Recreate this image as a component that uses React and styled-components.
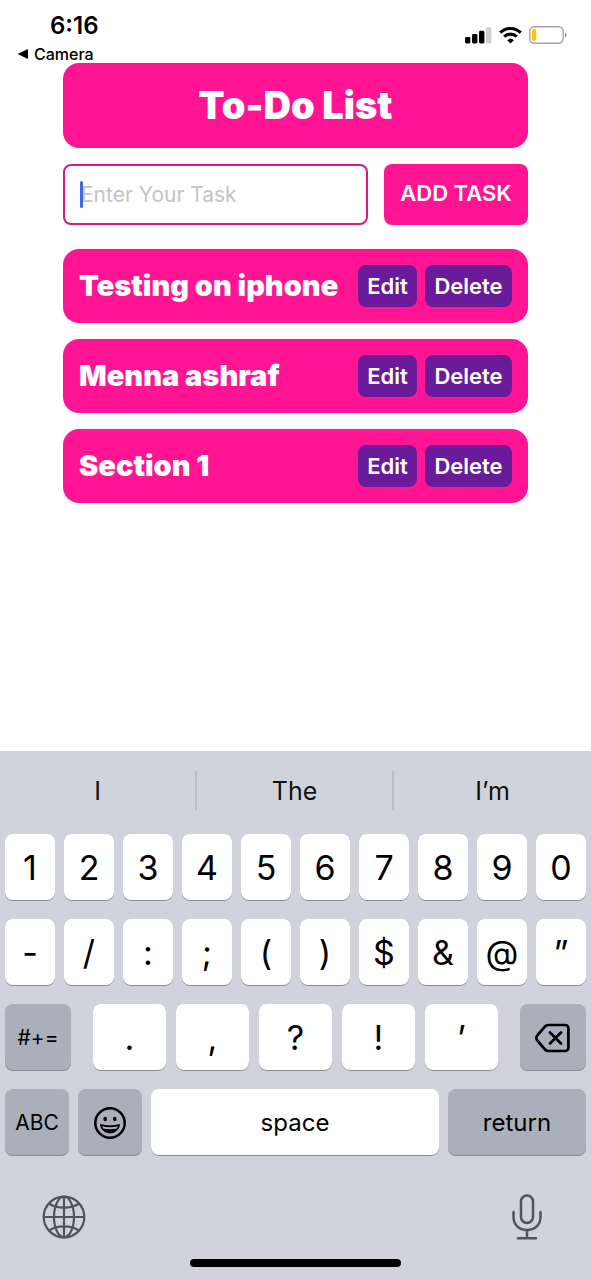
import React from "react";
import styled, { createGlobalStyle } from "styled-components";

const GlobalStyle = createGlobalStyle`
  *, *::before, *::after { box-sizing: border-box; }
  body {
    margin: 0;
    background: #fff;
    color: #000;
    font-family: Inter, "Liberation Sans", sans-serif;
  }
  button, input { font: inherit; color: inherit; }
  h1, h2, ul { margin: 0; padding: 0; }
`;

const Screen = styled.div`
  display: flex;
  flex-direction: column;
  min-height: 100vh;
`;

const StatusBar = styled.header`
  display: flex;
  justify-content: space-between;
  height: 63px;
  padding: 12px 23px 0 17px;
`;

const StatusLeft = styled.div`
  display: flex;
  flex-direction: column;
`;

const Time = styled.time`
  padding-left: 33px;
  font-size: 24px;
  font-weight: 600;
  line-height: 28px;
`;

const BackLink = styled.a`
  display: flex;
  align-items: center;
  gap: 6px;
  color: #000;
  font-size: 16px;
  font-weight: 500;
  line-height: 28px;
  text-decoration: none;
`;

const StatusIcons = styled.div`
  display: flex;
  align-items: center;
  gap: 7px;
  height: 46px;
`;

const Main = styled.main`
  display: flex;
  flex-direction: column;
  padding: 0 63px 24px;
`;

const TitleCard = styled.h1`
  padding: 16px;
  border-radius: 16px;
  background: #ff1493;
  color: #fff;
  font-size: 38px;
  font-weight: 900;
  line-height: 53px;
  text-align: center;
`;

const TaskForm = styled.form`
  display: flex;
  gap: 16px;
  margin: 16px 0 24px;
`;

const Field = styled.label`
  position: relative;
  flex: 1;
  min-width: 0;
`;

const Caret = styled.span`
  position: absolute;
  top: 17px;
  left: 17px;
  width: 3px;
  height: 27px;
  border-radius: 2px;
  background: #4169e1;
`;

const TaskInput = styled.input`
  display: block;
  width: 100%;
  height: 61px;
  padding: 0 16px;
  border: 2px solid #d81b7f;
  border-radius: 8px;
  outline: none;
  background: #fff;
  font-size: 21px;
  &::placeholder { color: #c4c4c6; opacity: 1; }
`;

const AddButton = styled.button`
  flex: none;
  width: 144px;
  padding: 0 0 4px;
  border: 0;
  border-radius: 8px;
  background: #ff1493;
  color: #fff;
  font-size: 22px;
  font-weight: 600;
  white-space: nowrap;
`;

const TaskList = styled.ul`
  display: flex;
  flex-direction: column;
  gap: 16px;
  list-style: none;
`;

const TaskItem = styled.li`
  display: flex;
  align-items: center;
  gap: 8px;
  padding: 16px;
  border-radius: 16px;
  background: #ff1493;
`;

const TaskName = styled.h2`
  flex: 1;
  min-width: 0;
  color: #fff;
  font-size: 29px;
  font-weight: 900;
  line-height: 42px;
  white-space: nowrap;
`;

const TaskButton = styled.button`
  flex: none;
  width: ${(p) => p.$width}px;
  height: 42px;
  padding: 0;
  border: 0;
  border-radius: 8px;
  background: #6a1b9a;
  color: #fff;
  font-size: 22px;
  font-weight: 600;
`;

const Keyboard = styled.section`
  margin-top: auto;
  background: #d0d3db;
`;

const Suggestions = styled.div`
  display: grid;
  grid-template-columns: repeat(3, 1fr);
  padding: 20px 0 24px;
`;

const Suggestion = styled.button`
  height: 39px;
  padding: 0;
  border: 0;
  border-right: ${(p) => (p.$last ? "0" : "2px solid #bcbfc5")};
  background: none;
  color: #111;
  font-size: 25px;
`;

const Keys = styled.div`
  display: flex;
  flex-direction: column;
  gap: 18px;
  padding: 0 5px;
`;

const KeyRow = styled.div`
  display: flex;
  gap: ${(p) => p.$gap || 9}px;
`;

const KeyGroup = styled.div`
  display: flex;
  flex: 1;
  gap: 10px;
`;

const Key = styled.button`
  display: flex;
  align-items: center;
  justify-content: center;
  flex: ${(p) => (p.$width ? `0 0 ${p.$width}px` : "1 1 0")};
  min-width: 0;
  height: 67px;
  padding: 0;
  border: 0;
  border-radius: 8px;
  background: ${(p) => (p.$dark ? "#a9afbb" : "#fff")};
  box-shadow: inset 0 -1px 0 #898b90;
  color: #000;
  font-size: ${(p) => p.$size || 34}px;
`;

const KeyboardFooter = styled.div`
  display: flex;
  align-items: center;
  justify-content: space-between;
  height: 103px;
  padding: 18px 48px 0 42px;
`;

const IconButton = styled.button`
  display: flex;
  padding: 0;
  border: 0;
  background: none;
  color: #50545c;
`;

const HomeIndicator = styled.div`
  width: 211px;
  height: 8px;
  margin: 0 auto 13px;
  border-radius: 4px;
  background: #000;
`;

const SignalIcon = () => (
  <svg width="27" height="18" viewBox="0 0 27 18" aria-hidden="true">
    <rect x="0" y="11" width="5.4" height="6.5" rx="1.4" />
    <rect x="7" y="8" width="5.4" height="9.5" rx="1.4" />
    <rect x="14" y="4.8" width="5.4" height="12.7" rx="1.4" />
    <rect x="21" y="1.2" width="5.4" height="16.3" rx="1.4" fill="#cfcfcf" />
  </svg>
);

const WifiIcon = () => (
  <svg width="23" height="18" viewBox="0 0 23 18" fill="none" stroke="#000" strokeWidth="3.1" aria-hidden="true">
    <path d="M1.2 6.7C7 1 16 1 21.8 6.7" />
    <path d="M5.2 10.7c3.6-3.4 9-3.4 12.6 0" />
    <path d="M8.1 14.2c2-1.8 4.8-1.8 6.8 0l-3.400 3.400z" fill="#000" stroke="none" />
  </svg>
);

const BatteryIcon = () => (
  <svg width="39" height="18" viewBox="0 0 39 18" aria-hidden="true">
    <rect x="0.8" y="0.8" width="33.4" height="16.4" rx="4.5" fill="none" stroke="#a3a3a3" strokeWidth="1.4" />
    <rect x="3" y="3" width="4.2" height="12" rx="1.8" fill="#fdc60b" />
    <path d="M36 6.5c2 .8 2 4.2 0 5z" fill="#8a8a8a" />
  </svg>
);

const BackArrow = () => (
  <svg width="11" height="10" viewBox="0 0 11 10" aria-hidden="true">
    <path d="M0.5 5 11 0v10z" />
  </svg>
);

const BackspaceIcon = () => (
  <svg width="36" height="30" viewBox="0 0 36 30" fill="none" stroke="#000" strokeWidth="2.7" strokeLinecap="round" strokeLinejoin="round" aria-hidden="true">
    <path d="M13.2 2h17a3.200 3.200 0 0 1 3.200 3.200v19.600a3.200 3.200 0 0 1-3.200 3.200h-17a4 4 0 0 1-2.900-1.200L2.700 18a4 4 0 0 1 0-6l7.600-8.800A4 4 0 0 1 13.200 2z" />
    <path d="m15 9.500 11 11m0-11-11 11" />
  </svg>
);

const SmileIcon = () => (
  <svg width="34" height="34" viewBox="0 0 34 34" aria-hidden="true">
    <circle cx="17" cy="17" r="14.7" fill="none" stroke="#000" strokeWidth="2.5" />
    <ellipse cx="12.2" cy="13" rx="1.8" ry="2.3" />
    <ellipse cx="21.8" cy="13" rx="1.8" ry="2.3" />
    <path d="M7.6 18.600c5.800 1.700 13 1.700 18.800 0-.3 4.900-4.400 8.300-9.400 8.300s-9.100-3.400-9.400-8.300z" stroke="#000" strokeLinejoin="round" />
    <path d="M9.3 20.300c4.800 1.300 10.600 1.300 15.400 0l-.7 2.100c-4.300 1.100-9.700 1.100-14 0z" fill="#a9afbb" />
  </svg>
);

const GlobeIcon = () => (
  <svg width="44" height="44" viewBox="0 0 44 44" fill="none" stroke="currentColor" strokeWidth="2.2" aria-hidden="true">
    <circle cx="22" cy="22" r="20.3" />
    <ellipse cx="22" cy="22" rx="10" ry="20.3" />
    <path d="M22 1.7v40.6M1.7 22h40.6" />
    <path d="M7 8.500c8 5.500 22 5.500 30 0M7 35.500c8-5.500 22-5.500 30 0" />
  </svg>
);

const MicIcon = () => (
  <svg width="32" height="46" viewBox="0 0 32 46" fill="none" stroke="currentColor" strokeWidth="2.5" strokeLinecap="round" aria-hidden="true">
    <rect x="10" y="1.5" width="12" height="27.500" rx="6" />
    <path d="M2.500 18v5c0 8 6 13 13.500 13s13.500-5 13.500-13v-5M16 36v8M7 44.300h18" />
  </svg>
);

const tasks = ["Testing on iphone", "Menna ashraf", "Section 1"];
const digits = ["1", "2", "3", "4", "5", "6", "7", "8", "9", "0"];
const symbols = ["-", "/", ":", ";", "(", ")", "$", "&", "@", "”"];
const punctuation = [".", ",", "?", "!", "’"];

export default function App() {
  return (
    <Screen>
      <GlobalStyle />
      <StatusBar>
        <StatusLeft>
          <Time>6:16</Time>
          <BackLink href="#camera">
            <BackArrow />
            Camera
          </BackLink>
        </StatusLeft>
        <StatusIcons>
          <SignalIcon />
          <WifiIcon />
          <BatteryIcon />
        </StatusIcons>
      </StatusBar>

      <Main>
        <TitleCard>To-Do List</TitleCard>
        <TaskForm onSubmit={(e) => e.preventDefault()}>
          <Field>
            <TaskInput type="text" placeholder="Enter Your Task" aria-label="Enter Your Task" />
            <Caret />
          </Field>
          <AddButton type="submit">ADD TASK</AddButton>
        </TaskForm>
        <TaskList>
          {tasks.map((task) => (
            <TaskItem key={task}>
              <TaskName>{task}</TaskName>
              <TaskButton type="button" $width={59}>Edit</TaskButton>
              <TaskButton type="button" $width={87}>Delete</TaskButton>
            </TaskItem>
          ))}
        </TaskList>
      </Main>

      <Keyboard aria-label="Keyboard">
        <Suggestions>
          <Suggestion type="button">I</Suggestion>
          <Suggestion type="button">The</Suggestion>
          <Suggestion type="button" $last>I’m</Suggestion>
        </Suggestions>
        <Keys>
          {[digits, symbols].map((row) => (
            <KeyRow key={row[0]}>
              {row.map((char) => (
                <Key type="button" key={char}>{char}</Key>
              ))}
            </KeyRow>
          ))}
          <KeyRow $gap={22}>
            <Key type="button" $dark $width={66} $size={21}>#+=</Key>
            <KeyGroup>
              {punctuation.map((char) => (
                <Key type="button" key={char}>{char}</Key>
              ))}
            </KeyGroup>
            <Key type="button" $dark $width={66} aria-label="Delete">
              <BackspaceIcon />
            </Key>
          </KeyRow>
          <KeyRow>
            <Key type="button" $dark $width={64} $size={21}>ABC</Key>
            <Key type="button" $dark $width={64} aria-label="Emoji">
              <SmileIcon />
            </Key>
            <Key type="button" $size={24}>space</Key>
            <Key type="button" $dark $width={138} $size={24}>return</Key>
          </KeyRow>
        </Keys>
        <KeyboardFooter>
          <IconButton type="button" aria-label="Next keyboard">
            <GlobeIcon />
          </IconButton>
          <IconButton type="button" aria-label="Dictation">
            <MicIcon />
          </IconButton>
        </KeyboardFooter>
        <HomeIndicator />
      </Keyboard>
    </Screen>
  );
}
